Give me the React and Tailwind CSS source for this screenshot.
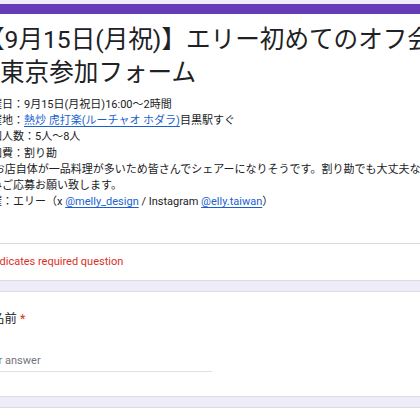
import React from "react";

const font = "font-['Roboto','Noto_Sans_CJK_JP',sans-serif]";

function Link({ children }) {
  return <span className="text-[#1a5fd0] underline underline-offset-[2px]">{children}</span>;
}

export default function App() {
  return (
    <div className={`w-[420px] h-[420px] overflow-hidden bg-[#f0ebf8] pt-[4px] ${font}`}>
      <div className="-ml-[40px] w-[520px] flex flex-col gap-[10px]">
        {/* header card */}
        <div className="bg-white border-x border-b border-[#dadce0] rounded-b-lg">
          <div className="h-[10px] bg-[#673ab7]" />
          <div className="pl-[19px] pt-[9px] pb-[33px] text-[#202124]">
            <div className="text-[24.6px] leading-[33px] whitespace-nowrap">
              <div>【9月15日(月祝)】エリー初めてのオフ会</div>
              <div className="pl-[20px]">東京参加フォーム</div>
            </div>
            <div className="mt-[8px] text-[11px] leading-[16.2px] whitespace-nowrap">
              <div>開催日：9月15日(月祝日)16:00～2時間</div>
              <div>
                開催地：<Link>熱炒 虎打楽(ルーチャオ ホダラ)</Link>目黒駅すぐ
              </div>
              <div>参加人数：5人～8人</div>
              <div>参加費：割り勘</div>
              <div>※ お店自体が一品料理が多いため皆さんでシェアーになりそうです。割り勘でも大丈夫な方</div>
              <div>のみご応募お願い致します。</div>
              <div>
                主催：エリー（x <Link>@melly_design</Link> / Instagram <Link>@elly.taiwan</Link>）
              </div>
            </div>
          </div>
          <div className="border-t border-[#dadce0] pl-[22px] py-[10px] text-[11px] leading-[16px] text-[#d93025]">
            * Indicates required question
          </div>
        </div>

        {/* question card */}
        <div className="bg-white border border-[#dadce0] rounded-lg pl-[19px] pt-[18px] pb-[24px]">
          <div className="text-[12.3px] leading-[18px] text-[#202124]">
            お名前 <span className="text-[#d93025]">*</span>
          </div>
          <div className="mt-[25px] w-[232px] border-b border-[#e0e0e0] pb-[2px] text-[11px] leading-[16px] text-[#70757a]">
            Your answer
          </div>
        </div>

        <div className="bg-white border border-[#dadce0] rounded-lg h-[120px]" />
      </div>
    </div>
  );
}
